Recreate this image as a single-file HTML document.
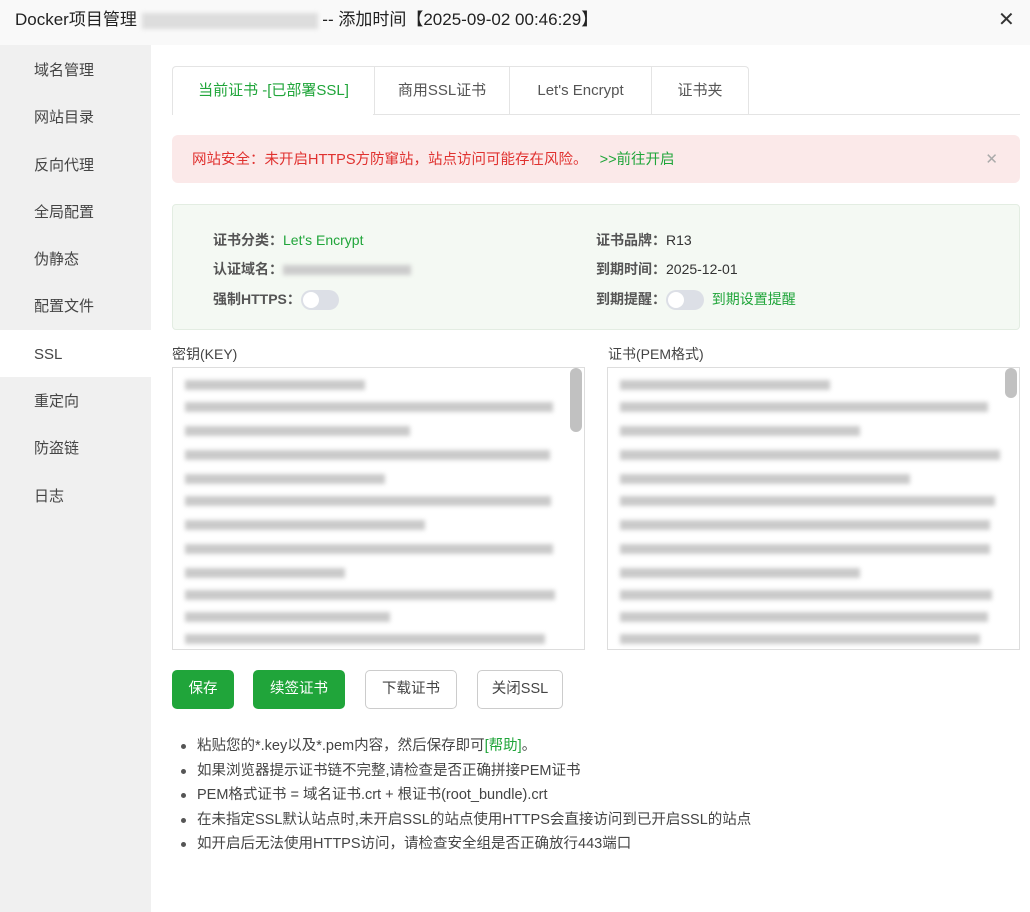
<!DOCTYPE html>
<html><head><meta charset="utf-8"><style>
*{margin:0;padding:0;box-sizing:border-box}
body{width:1030px;height:912px;overflow:hidden;background:#fff;font-family:"Liberation Sans","Noto Sans CJK SC",sans-serif;color:#333;font-size:14px;position:relative}
.hdr{position:absolute;left:0;top:0;width:1030px;height:45px;background:#f9f9f9;font-size:17px;line-height:40px;padding-left:15px;color:#222}
.side{position:absolute;left:0;top:45px;width:151px;height:867px;background:#f0f0f0}
.side div{height:47.3px;line-height:49px;padding-left:34px;font-size:15px;color:#444}
.side .on{background:#fff}
.abs{position:absolute}
.tabs{left:172px;top:66px;height:49px;display:flex;border:1px solid #e4e4e4;border-bottom:none;border-radius:4px 4px 0 0}
.tabs div{border-right:1px solid #e4e4e4;line-height:48px;font-size:15px;color:#555;text-align:center}
.tabs div.g{color:#20a53a}
.alert{left:172px;top:135px;width:848px;height:48px;background:#fbe9e9;border-radius:6px;line-height:50px;padding-left:20px;color:#e0312f;font-size:14.5px}
.g{color:#20a53a}
.info{left:172px;top:204px;width:848px;height:126px;background:#f4f9f3;border:1px solid #e3ede2;border-radius:4px}
.lbl{font-weight:bold;color:#555}
.tog{display:inline-block;width:38px;height:20px;border-radius:10px;background:#dcdfe6;vertical-align:middle;position:relative}
.tog:after{content:"";position:absolute;left:2px;top:2px;width:16px;height:16px;border-radius:50%;background:#fff}
.ta{border:1px solid #ddd;background:#fff;overflow:hidden}
.bar{position:absolute;height:10px;background:#bdbdbd;filter:blur(2px);opacity:.8}
.btn{position:absolute;top:670px;height:39px;line-height:37px;text-align:center;border-radius:5px;font-size:14.5px}
.gb{background:#20a53a;color:#fff;border:1px solid #20a53a}
.wb{background:#fff;color:#444;border:1px solid #ccc}
ul{position:absolute;left:181px;top:734px;list-style:none;font-size:14.5px;color:#444}
li{height:24.5px;line-height:24.5px;padding-left:16px;position:relative}
li:before{content:"";position:absolute;left:0;top:10px;width:5px;height:5px;border-radius:50%;background:#555}
</style></head><body>
<div class="hdr">Docker项目管理 <span style="display:inline-block;width:176px;height:16px;background:#ddd;filter:blur(2px);vertical-align:middle"></span> -- 添加时间【2025-09-02 00:46:29】</div>
<div class="abs" style="left:998px;top:7px;font-size:20px;color:#333">✕</div>
<div class="side" style="padding-top:1px">
<div>域名管理</div><div>网站目录</div><div>反向代理</div><div>全局配置</div><div>伪静态</div><div>配置文件</div><div class="on">SSL</div><div>重定向</div><div>防盗链</div><div>日志</div></div>
<div class="abs tabs"><div class="g" style="width:202px">当前证书 -[已部署SSL]</div><div style="width:135px">商用SSL证书</div><div style="width:142px">Let's Encrypt</div><div style="width:96px;border-right:none">证书夹</div></div>
<div class="abs" style="left:373px;top:114px;width:647px;height:1px;background:#e4e4e4"></div>
<div class="abs alert">网站安全：未开启HTTPS方防窜站，站点访问可能存在风险。 &nbsp; <span class="g">&gt;&gt;前往开启</span><span style="position:absolute;right:22px;color:#aaa;font-size:15px">✕</span></div>
<div class="abs info">
<div class="abs" style="left:40px;top:25px"><span class="lbl">证书分类：</span><span class="g">Let's Encrypt</span></div>
<div class="abs" style="left:40px;top:54px"><span class="lbl">认证域名：</span><span style="display:inline-block;width:128px;height:10px;background:#ccc;filter:blur(2px);vertical-align:middle"></span></div>
<div class="abs" style="left:40px;top:84px"><span class="lbl">强制HTTPS：</span><span class="tog"></span></div>
<div class="abs" style="left:423px;top:25px"><span class="lbl">证书品牌：</span>R13</div>
<div class="abs" style="left:423px;top:54px"><span class="lbl">到期时间：</span>2025-12-01</div>
<div class="abs" style="left:423px;top:84px"><span class="lbl">到期提醒：</span><span class="tog"></span> &nbsp;<span class="g">到期设置提醒</span></div>
</div>
<div class="abs" style="left:172px;top:344px;color:#444">密钥(KEY)</div>
<div class="abs" style="left:608px;top:344px;color:#444">证书(PEM格式)</div>
<div class="abs ta" style="left:172px;top:367px;width:413px;height:283px">
<div class="abs" style="right:2px;top:0;width:12px;height:64px;background:#c1c1c1;border-radius:6px"></div>
<div class="bar" style="left:12px;top:12px;width:180px"></div>
<div class="bar" style="left:12px;top:34px;width:368px"></div><div class="bar" style="left:12px;top:58px;width:225px"></div>
<div class="bar" style="left:12px;top:82px;width:365px"></div><div class="bar" style="left:12px;top:106px;width:200px"></div>
<div class="bar" style="left:12px;top:128px;width:366px"></div><div class="bar" style="left:12px;top:152px;width:240px"></div>
<div class="bar" style="left:12px;top:176px;width:368px"></div><div class="bar" style="left:12px;top:200px;width:160px"></div>
<div class="bar" style="left:12px;top:222px;width:370px"></div><div class="bar" style="left:12px;top:244px;width:205px"></div>
<div class="bar" style="left:12px;top:266px;width:360px"></div>
</div>
<div class="abs ta" style="left:607px;top:367px;width:413px;height:283px">
<div class="abs" style="right:2px;top:0;width:12px;height:30px;background:#c1c1c1;border-radius:6px"></div>
<div class="bar" style="left:12px;top:12px;width:210px"></div>
<div class="bar" style="left:12px;top:34px;width:368px"></div><div class="bar" style="left:12px;top:58px;width:240px"></div>
<div class="bar" style="left:12px;top:82px;width:380px"></div><div class="bar" style="left:12px;top:106px;width:290px"></div>
<div class="bar" style="left:12px;top:128px;width:375px"></div><div class="bar" style="left:12px;top:152px;width:370px"></div>
<div class="bar" style="left:12px;top:176px;width:370px"></div><div class="bar" style="left:12px;top:200px;width:240px"></div>
<div class="bar" style="left:12px;top:222px;width:372px"></div><div class="bar" style="left:12px;top:244px;width:368px"></div>
<div class="bar" style="left:12px;top:266px;width:360px"></div>
</div>
<div class="btn gb" style="left:172px;width:62px">保存</div>
<div class="btn gb" style="left:253px;width:92px">续签证书</div>
<div class="btn wb" style="left:365px;width:92px">下载证书</div>
<div class="btn wb" style="left:477px;width:86px">关闭SSL</div>
<ul>
<li>粘贴您的*.key以及*.pem内容，然后保存即可<span class="g">[帮助]</span>。</li>
<li>如果浏览器提示证书链不完整,请检查是否正确拼接PEM证书</li>
<li>PEM格式证书 = 域名证书.crt + 根证书(root_bundle).crt</li>
<li>在未指定SSL默认站点时,未开启SSL的站点使用HTTPS会直接访问到已开启SSL的站点</li>
<li>如开启后无法使用HTTPS访问，请检查安全组是否正确放行443端口</li>
</ul>
</body></html>
